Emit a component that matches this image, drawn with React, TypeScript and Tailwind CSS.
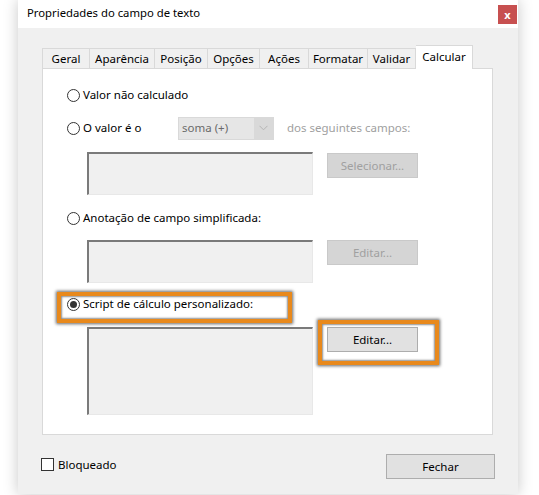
import { useState } from "react";

const tabs = [
  { label: "Geral", w: "w-[48px]" },
  { label: "Aparência", w: "w-[65px]" },
  { label: "Posição", w: "w-[53px]" },
  { label: "Opções", w: "w-[52px]" },
  { label: "Ações", w: "w-[49px]" },
  { label: "Formatar", w: "w-[59px]" },
  { label: "Validar", w: "w-[48px]" },
  { label: "Calcular", w: "w-[57px]" },
];

function Radio({ checked, label }: { checked?: boolean; label: string }) {
  return (
    <div className="flex items-center">
      <span className="w-[13px] h-[13px] rounded-full border border-[#333] bg-white flex items-center justify-center">
        {checked && <span className="w-[7px] h-[7px] rounded-full bg-[#333]" />}
      </span>
      <span className="ml-[3px]">{label}</span>
    </div>
  );
}

function FieldBox({ tall }: { tall?: boolean }) {
  return (
    <div
      className={
        (tall ? "h-[88px]" : "h-[43px]") +
        " w-[226px] bg-[#f0f0f0] border-t-2 border-l-2 border-r border-b border-t-[#7a7a7a] border-l-[#7a7a7a] border-r-[#e8e8e8] border-b-[#e8e8e8]"
      }
    />
  );
}

function Btn({ label, disabled }: { label: string; disabled?: boolean }) {
  return (
    <button
      disabled={disabled}
      className={
        disabled
          ? "w-[91px] h-[25px] bg-[#d5d5d5] border border-[#c9c9c9] text-[#a0a0a0]"
          : "w-[91px] h-[25px] bg-[#e1e1e1] border border-[#adadad] text-black"
      }
    >
      {label}
    </button>
  );
}

export default function App() {
  const [active] = useState("Calcular");

  return (
    <div className="relative w-[539px] h-[495px] bg-white overflow-hidden font-['Noto_Sans',sans-serif] text-[11.5px] text-black">
      <div className="ml-[18px] w-[500px] h-[494px] bg-[#f0f0f0] flex flex-col shadow-[0_0_14px_rgba(0,0,0,0.22)]">
        {/* title bar */}
        <div className="h-[28px] bg-white flex items-start">
          <span className="ml-[9px] mt-[5px] text-[11.3px]">Propriedades do campo de texto</span>
          <button className="ml-auto mr-px mt-[5px] w-[19px] h-[19px] bg-[#c75050] text-white text-[11px] font-bold leading-none flex items-center justify-center">
            x
          </button>
        </div>

        <div className="pl-[24px] pt-[17px]">
          {/* tabs */}
          <div className="flex items-end h-[23px]">
            {tabs.map((t, i) => {
              const sel = t.label === active;
              return (
                <div
                  key={t.label}
                  className={
                    t.w +
                    (i === 0 ? " border-l" : "") +
                    (sel
                      ? " h-[24px] -mb-px relative z-10 bg-white border-t border-r border-[#d9d9d9] pt-[2px] text-center"
                      : " h-[20px] bg-[#f0f0f0] border-t border-r border-[#d9d9d9] pt-px text-center")
                  }
                >
                  {t.label}
                </div>
              );
            })}
          </div>

          {/* panel */}
          <div className="w-[451px] h-[367px] bg-white border border-[#d9d9d9] pl-[24px] pt-[14px] flex flex-col">
            <div className="h-[24px] flex items-center">
              <Radio label="Valor não calculado" />
            </div>

            <div className="h-[24px] mt-[9px] flex items-center">
              <div className="w-[111px]">
                <Radio label="O valor é o" />
              </div>
              <div className="w-[96px] h-[23px] bg-[#d9d9d9] flex p-px">
                <div className="flex-1 bg-[#e6e6e6] text-[#6a6a6a] pl-[3px] flex items-center">soma (+)</div>
                <div className="w-[19px] flex items-center justify-center">
                  <svg width="9" height="6" viewBox="0 0 9 6" fill="none">
                    <path d="M0.5 0.8 L4.5 4.8 L8.5 0.8" stroke="#b4b4b4" strokeWidth="1" />
                  </svg>
                </div>
              </div>
              <span className="ml-[13px] text-[#a0a0a0]">dos seguintes campos:</span>
            </div>

            <div className="mt-[12px] pl-[20px] flex items-start gap-[14px]">
              <FieldBox />
              <div className="mt-px">
                <Btn label="Selecionar..." disabled />
              </div>
            </div>

            <div className="h-[24px] mt-[11px] flex items-center">
              <Radio label="Anotação de campo simplificada:" />
            </div>

            <div className="mt-[10px] pl-[20px] flex items-start gap-[14px]">
              <FieldBox />
              <Btn label="Editar..." disabled />
            </div>

            <div className="h-[24px] mt-[9px] flex items-center">
              <Radio checked label="Script de cálculo personalizado:" />
            </div>

            <div className="mt-[11px] pl-[20px] flex items-start gap-[14px]">
              <FieldBox tall />
              <Btn label="Editar..." />
            </div>
          </div>
        </div>

        {/* footer */}
        <div className="mt-[19px] px-[23px] flex items-start justify-between">
          <div className="mt-[2px] flex items-center">
            <span className="w-[13px] h-[13px] border border-[#333] bg-white" />
            <span className="ml-[4px]">Bloqueado</span>
          </div>
          <button className="w-[109px] h-[25px] bg-[#e1e1e1] border border-[#adadad]">Fechar</button>
        </div>
      </div>

      {/* orange highlight annotations */}
      <div className="absolute left-[57px] top-[292px] w-[235px] h-[31px] border-[4px] border-[#e8891c] shadow-[0_0_3px_1px_rgba(0,0,0,0.6),inset_0_0_2px_1px_rgba(0,0,0,0.45)]" />
      <div className="absolute left-[318px] top-[320px] w-[121px] h-[45px] border-[4px] border-[#e8891c] shadow-[0_0_3px_1px_rgba(0,0,0,0.6),inset_0_0_2px_1px_rgba(0,0,0,0.45)]" />
    </div>
  );
}
